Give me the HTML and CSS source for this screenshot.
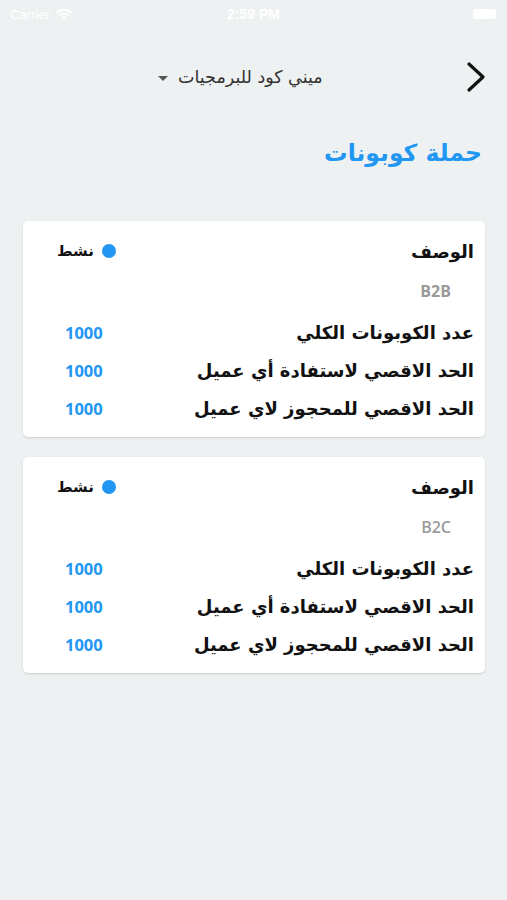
FILE: index.html
```html
<!DOCTYPE html>
<html lang="ar">
<head>
<meta charset="utf-8">
<link rel="stylesheet" href="styles.css">
</head>
<body>
<div class="screen">
  <div class="status">
    <div class="st-left">Carrier
      <svg class="wifi" width="18" height="13" viewBox="0 0 18 13"><path d="M9 12.5 L11.6 9.4 A4 4 0 0 0 6.4 9.4 Z" fill="#fff"/><path d="M3.6 6.8 A7.8 7.8 0 0 1 14.4 6.8 L13 8.3 A5.8 5.8 0 0 0 5 8.3 Z" fill="#fff"/><path d="M0.8 4 A11.8 11.8 0 0 1 17.2 4 L15.8 5.5 A9.8 9.8 0 0 0 2.2 5.5 Z" fill="#fff"/></svg>
    </div>
    <div class="st-time">2:59 PM</div>
    <div class="st-right"><span class="battery"></span></div>
  </div>
  <div class="nav">
    <svg class="chev" width="22" height="32" viewBox="0 0 22 32"><path d="M3 3 L17 16 L3 29" fill="none" stroke="#111" stroke-width="3.2" stroke-linecap="round" stroke-linejoin="round"/></svg>
    <div class="nav-title"><span>ميني كود للبرمجيات</span><span class="caret"></span></div>
  </div>
  <h1 class="heading">حملة كوبونات</h1>
  <div class="cards">
    <div class="card">
      <div class="card-head">
        <span class="desc">الوصف</span>
        <span class="status-tag"><span class="dot"></span>نشط</span>
      </div>
      <div class="code">B2B</div>
      <div class="row"><span class="label">عدد الكوبونات الكلي</span><span class="val">1000</span></div>
      <div class="row"><span class="label">الحد الاقصي لاستفادة أي عميل</span><span class="val">1000</span></div>
      <div class="row"><span class="label">الحد الاقصي للمحجوز لاي عميل</span><span class="val">1000</span></div>
    </div>
    <div class="card">
      <div class="card-head">
        <span class="desc">الوصف</span>
        <span class="status-tag"><span class="dot"></span>نشط</span>
      </div>
      <div class="code light">B2C</div>
      <div class="row"><span class="label">عدد الكوبونات الكلي</span><span class="val">1000</span></div>
      <div class="row"><span class="label">الحد الاقصي لاستفادة أي عميل</span><span class="val">1000</span></div>
      <div class="row"><span class="label">الحد الاقصي للمحجوز لاي عميل</span><span class="val">1000</span></div>
    </div>
  </div>
</div>
</body>
</html>
```
FILE: styles.css
```css
* { box-sizing: border-box; }
html, body { margin: 0; padding: 0; }
body {
  background: #eef1f2;
  font-family: "DejaVu Sans", "Noto Sans", sans-serif;
  width: 507px;
  height: 900px;
  overflow: hidden;
}
.screen { width: 507px; }
.status {
  height: 28px;
  display: flex;
  align-items: center;
  justify-content: space-between;
  padding: 0 11px 0 10px;
  color: #fff;
  font-family: "Liberation Sans", sans-serif;
  font-size: 13px;
  position: relative;
}
.st-left { display: flex; align-items: center; gap: 5px; }
.st-time {
  position: absolute;
  left: 0; right: 0;
  text-align: center;
  font-weight: bold;
  font-size: 14px;
}
.battery {
  display: block;
  width: 23px;
  height: 10px;
  background: #fff;
  border-radius: 3px;
}
.nav {
  direction: rtl;
  display: flex;
  align-items: center;
  padding: 0 19px 0 0;
  position: relative;
  margin-top: 27px;
  height: 44px;
}
.chev { display: block; }
.nav-title {
  position: absolute;
  left: 158px;
  top: 0;
  height: 44px;
  display: flex;
  align-items: center;
  gap: 10px;
  direction: rtl;
  font-size: 17.5px;
  color: #333;
}
.caret {
  width: 0; height: 0;
  border-left: 5px solid transparent;
  border-right: 5px solid transparent;
  border-top: 5px solid #555;
  margin-top: 2px;
}
.heading {
  direction: rtl;
  margin: 39px 25px 0 0;
  font-size: 23.5px;
  font-weight: bold;
  color: #2196f3;
  line-height: 30px;
}
.cards {
  margin-top: 53px;
  padding: 0 22px 0 23px;
  display: flex;
  flex-direction: column;
  gap: 20px;
}
.card {
  background: #fff;
  border-radius: 5px;
  box-shadow: 0 1px 2px rgba(0,0,0,0.15);
  direction: rtl;
  padding: 15px 11px 12px 0;
  height: 216px;
}
.card-head {
  display: flex;
  justify-content: space-between;
  align-items: center;
  height: 30px;
}
.desc { font-size: 18px; font-weight: bold; color: #111; }
.status-tag {
  display: flex;
  align-items: center;
  gap: 8px;
  font-size: 15px;
  font-weight: bold;
  color: #111;
  margin-left: 34px;
}
.dot {
  width: 14px; height: 14px;
  border-radius: 50%;
  background: #2196f3;
}
.code {
  font-family: "Open Sans", sans-serif;
  font-weight: bold;
  font-size: 16px;
  color: #999;
  margin: 15px 23px 0 0;
  line-height: 20px;
  direction: ltr;
  text-align: right;
}
.code.light { font-weight: 600; color: #9a9a9a; }
.row {
  display: flex;
  justify-content: space-between;
  align-items: center;
  height: 38px;
}
.code + .row { margin-top: 12px; }
.label { font-size: 18px; font-weight: bold; color: #111; }
.val {
  font-family: "Open Sans", sans-serif;
  font-weight: bold;
  font-size: 16.5px;
  color: #2196f3;
  margin-left: 42px;
}
```
